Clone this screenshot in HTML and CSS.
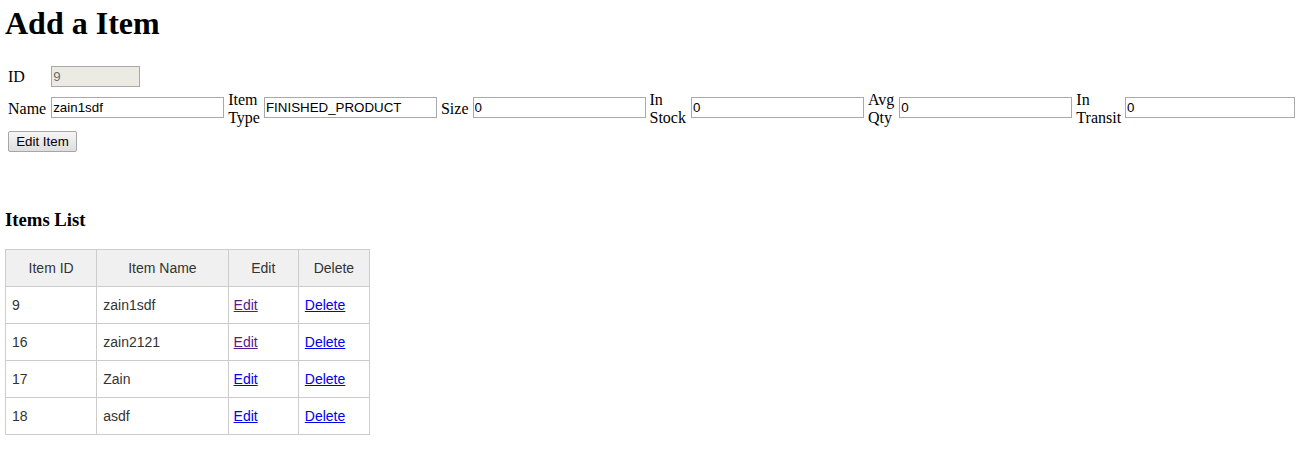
FILE: index.html
```html
<!DOCTYPE html>
<html>
<head>
<meta charset="utf-8">
<title>Add a Item</title>
<link rel="stylesheet" href="styles.css">
</head>
<body>
<h1 class="title">Add a Item</h1>
<table class="form">
  <tr>
    <td class="lbl lbl-pad">ID</td>
    <td><input class="field field-id" type="text" value="9" disabled></td>
  </tr>
  <tr class="main-row">
    <td class="lbl lbl-pad">Name</td>
    <td class="in-cell"><input class="field" type="text" value="zain1sdf"></td>
    <td class="lbl">Item Type</td>
    <td class="in-cell"><input class="field" type="text" value="FINISHED_PRODUCT"></td>
    <td class="lbl">Size</td>
    <td class="in-cell"><input class="field" type="text" value="0"></td>
    <td class="lbl lbl-pad">In Stock</td>
    <td class="in-cell"><input class="field" type="text" value="0"></td>
    <td class="lbl lbl-pad">Avg Qty</td>
    <td class="in-cell"><input class="field" type="text" value="0"></td>
    <td class="lbl">In Transit</td>
    <td class="in-cell"><input class="field field-last" type="text" value="0"></td>
  </tr>
  <tr>
    <td colspan="2" class="btn-cell"><button class="btn" type="button">Edit Item</button></td>
  </tr>
</table>

<h3 class="subtitle">Items List</h3>
<table class="list">
  <colgroup>
    <col class="c1"><col class="c2"><col class="c3"><col class="c4">
  </colgroup>
  <thead>
    <tr><th>Item ID</th><th>Item Name</th><th>Edit</th><th>Delete</th></tr>
  </thead>
  <tbody>
    <tr><td>9</td><td>zain1sdf</td><td><a class="visited" href="#">Edit</a></td><td><a href="#">Delete</a></td></tr>
    <tr><td>16</td><td>zain2121</td><td><a class="visited" href="#">Edit</a></td><td><a href="#">Delete</a></td></tr>
    <tr><td>17</td><td>Zain</td><td><a href="#">Edit</a></td><td><a href="#">Delete</a></td></tr>
    <tr><td>18</td><td>asdf</td><td><a href="#">Edit</a></td><td><a href="#">Delete</a></td></tr>
  </tbody>
</table>
</body>
</html>
```
FILE: styles.css
```css
html, body {
  background: #fff;
}
body {
  margin: 5px;
  font-family: "Liberation Serif", "Times New Roman", serif;
  font-size: 16px;
  color: #000;
}
.title {
  font-size: 32px;
  font-weight: bold;
  margin: 0 0 21.44px 0;
}
.form {
  border-spacing: 2px;
}
.form td {
  padding: 1px;
  vertical-align: middle;
}
.lbl {
  width: 1px;
  line-height: 18px;
}
.form td.lbl-pad {
  padding-right: 2px;
}
.main-row td.in-cell {
  padding-bottom: 5px;
}
.field {
  box-sizing: border-box;
  width: 173px;
  height: 21px;
  margin: 0;
  padding: 1px 1px;
  border: 1px solid #a9a9a9;
  font-family: "Liberation Sans", Arial, sans-serif;
  font-size: 13.33px;
  color: #000;
  background: #fff;
}
.field-last {
  width: 170px;
}
.field-id {
  width: 89px;
  background: #ebebe4;
  color: #6d6d6d;
}
.btn-cell {
  padding-top: 0;
}
.btn {
  box-sizing: border-box;
  width: 69px;
  height: 21px;
  margin: 0;
  padding: 0 6px;
  font-family: "Liberation Sans", Arial, sans-serif;
  font-size: 13.33px;
  color: #000;
  border: 1px solid #a6a6a6;
  border-radius: 2px;
  background: linear-gradient(#f6f6f6, #dedede);
}
.subtitle {
  font-size: 18.72px;
  font-weight: bold;
  margin: 54px 0 18px 0;
}
.list {
  border-collapse: collapse;
  table-layout: fixed;
  width: 365px;
  font-family: "Liberation Sans", Arial, sans-serif;
  font-size: 14px;
  color: #333;
}
.c1 { width: 91px; }
.c2 { width: 131px; }
.c3 { width: 70px; }
.c4 { width: 71px; }
.list th, .list td {
  border: 1px solid #ccc;
  height: 37px;
  box-sizing: border-box;
  padding: 0 6px;
  text-align: left;
  vertical-align: middle;
}
.list td:nth-child(3) {
  padding-left: 5px;
}
.list th {
  background: #f0f0f0;
  font-weight: normal;
  text-align: center;
}
.list a {
  color: #0000ee;
  text-decoration: underline;
}
.list a.visited {
  color: #551a8b;
}
```
